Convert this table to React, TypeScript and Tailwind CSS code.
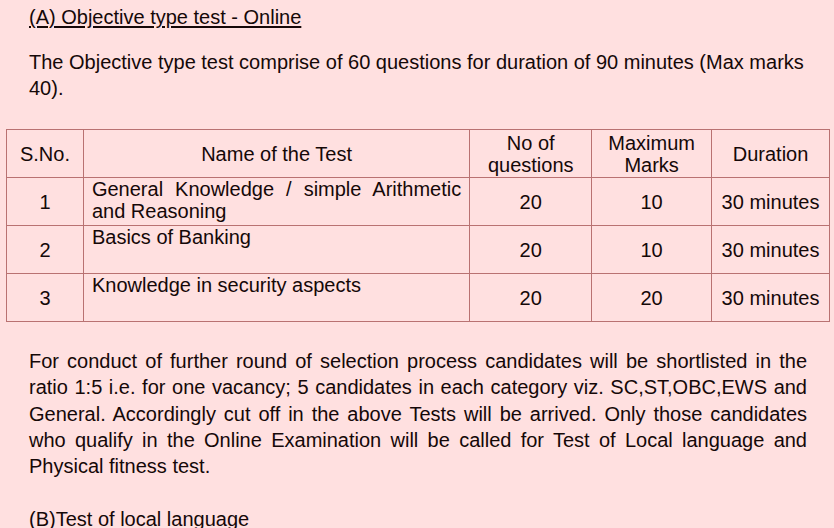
export default function App() {
  const rows = [
    { n: "1", name: "General Knowledge / simple Arithmetic and Reasoning", q: "20", m: "10", d: "30 minutes" },
    { n: "2", name: "Basics of Banking", q: "20", m: "10", d: "30 minutes" },
    { n: "3", name: "Knowledge in security aspects", q: "20", m: "20", d: "30 minutes" },
  ];
  const cell = "border border-[#b97272] h-[48px] p-0";
  return (
    <div className="w-[834px] h-[528px] overflow-hidden bg-[#ffe0e0] text-[#150808] text-[20px] leading-[26px]" style={{ fontFamily: '"Liberation Sans", Arial, sans-serif' }}>
      <div className="px-[29px] pt-[4px]">
        <p className="underline underline-offset-[2px]">(A) Objective type test - Online</p>
        <p className="mt-[19px] w-[780px]">
          The Objective type test comprise of 60 questions for duration of 90 minutes (Max marks 40).
        </p>
      </div>
      <table className="ml-[6px] mt-[28px] w-[824px] border-collapse leading-[22px]">
        <colgroup>
          <col className="w-[77px]" />
          <col className="w-[387px]" />
          <col className="w-[122px]" />
          <col className="w-[120px]" />
          <col className="w-[118px]" />
        </colgroup>
        <thead>
          <tr>
            <th className={`${cell} font-normal text-center`}>S.No.</th>
            <th className={`${cell} font-normal text-center`}>Name of the Test</th>
            <th className={`${cell} font-normal text-center`}>No of<br />questions</th>
            <th className={`${cell} font-normal text-center`}>Maximum<br />Marks</th>
            <th className={`${cell} font-normal text-center`}>Duration</th>
          </tr>
        </thead>
        <tbody>
          {rows.map((r) => (
            <tr key={r.n}>
              <td className={`${cell} text-center align-middle`}>{r.n}</td>
              <td className={`${cell} align-top px-[8px] text-justify`}>{r.name}</td>
              <td className={`${cell} text-center align-middle`}>{r.q}</td>
              <td className={`${cell} text-center align-middle`}>{r.m}</td>
              <td className={`${cell} text-center align-middle`}>{r.d}</td>
            </tr>
          ))}
        </tbody>
      </table>
      <div className="px-[29px] mt-[26px]">
        <p className="text-justify w-[778px] leading-[26.3px]">
          For conduct of further round of selection process candidates will be shortlisted in the ratio 1:5 i.e. for one vacancy; 5 candidates in each category viz. SC,ST,OBC,EWS and General. Accordingly cut off in the above Tests will be arrived. Only those candidates who qualify in the Online Examination will be called for Test of Local language and Physical fitness test.
        </p>
        <p className="mt-[27px]">(B)Test of local language</p>
      </div>
    </div>
  );
}
